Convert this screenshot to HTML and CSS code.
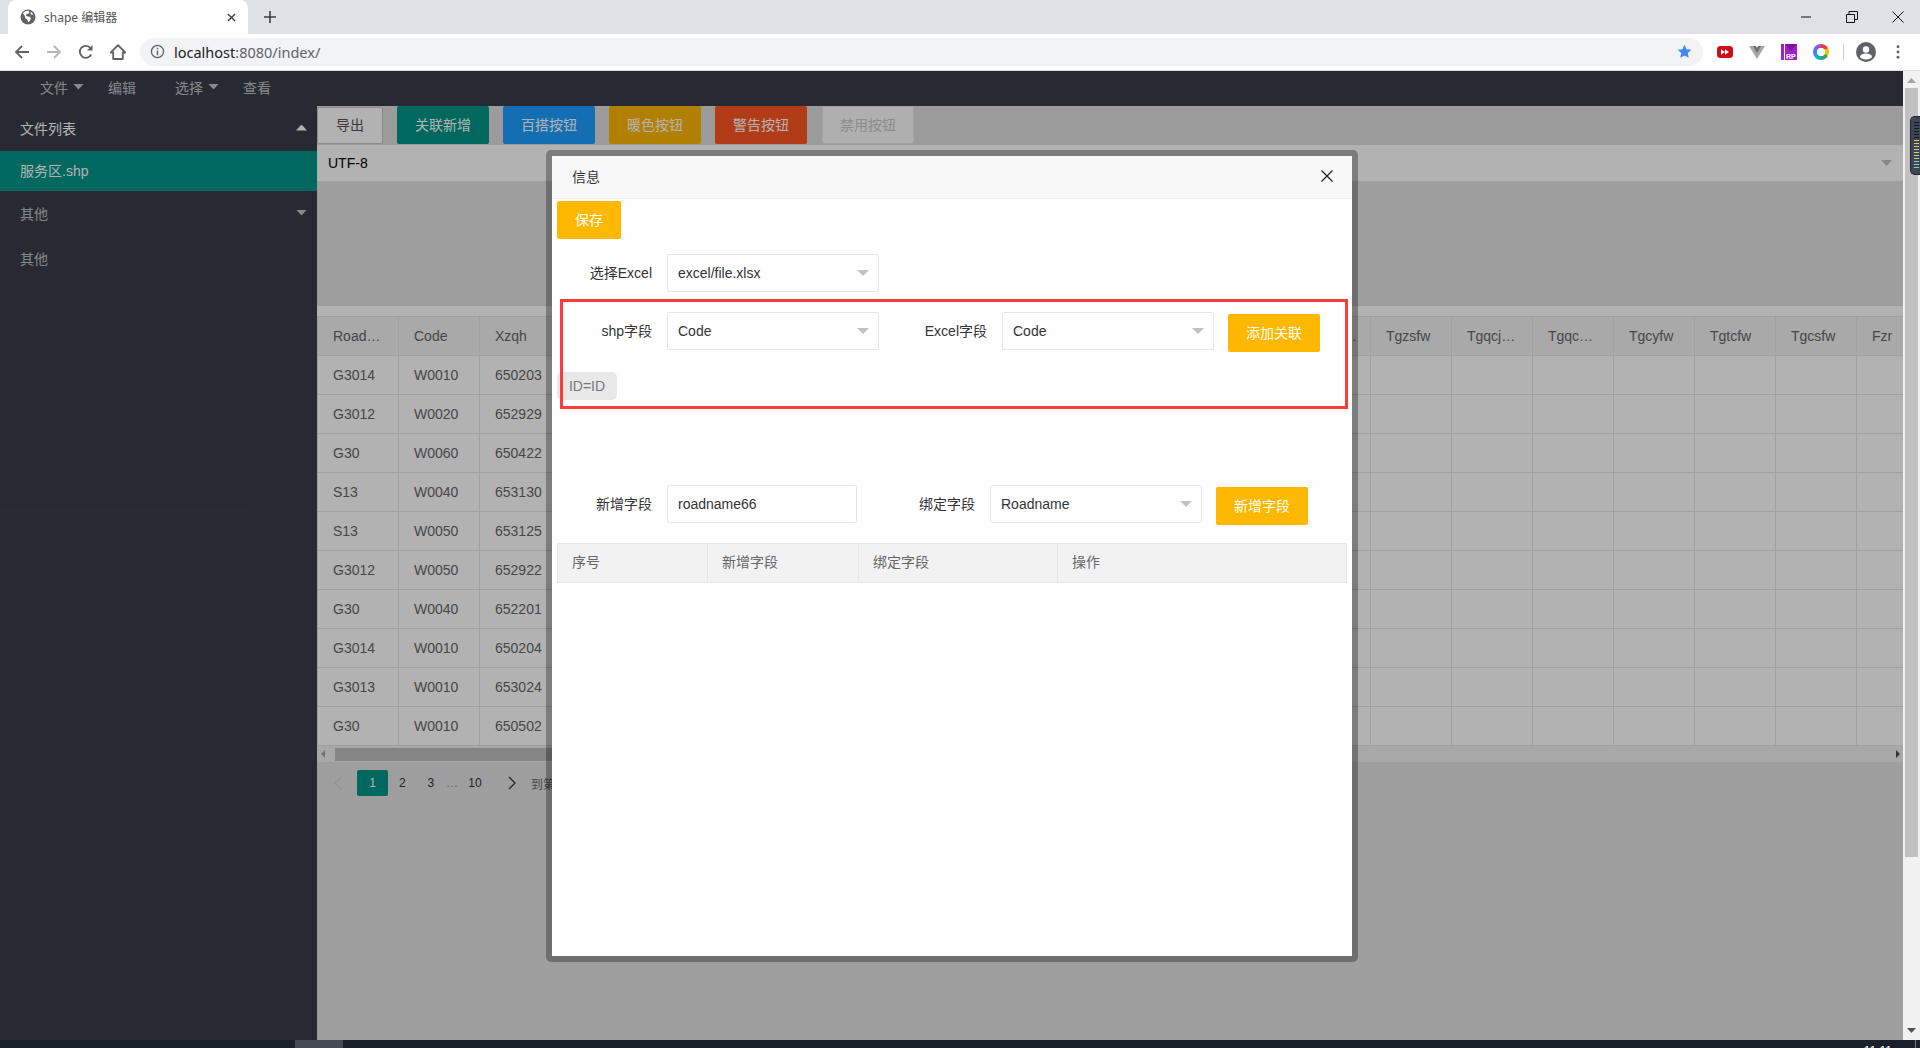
FILE: index.html
```html
<!DOCTYPE html>
<html lang="zh">
<head>
<meta charset="utf-8">
<title>shape 编辑器</title>
<link rel="stylesheet" href="styles.css">
</head>
<body>
<div class="tabstrip">
  <div class="tab">
    <svg class="favicon" viewBox="0 0 16 16"><circle cx="8" cy="8" r="7.500" fill="#5f6368"/><path d="M3 4.200c1.500-1.800 3.500-2.600 5.500-2.400l1 1.400-1.300 1.600-1.700.2-.5 1.500 1.500 1 2.200.2 1.300 1.600-1.300 2.700-1.600 1.300-.6-2.800-2.200-1.200-.2-1.800z" fill="#fff"/><path d="M11 2.800l2.300 2.400-1.400.8-1.400-1.200z" fill="#fff"/></svg>
    <span class="tab-title">shape 编辑器</span>
    <svg class="tab-close" viewBox="0 0 10 10"><path d="M1 1l8 8M9 1l-8 8" stroke="#3c4043" stroke-width="1.500" fill="none"/></svg>
  </div>
  <svg class="newtab" viewBox="0 0 12 12"><path d="M6 0v12M0 6h12" stroke="#3c4043" stroke-width="1.600" fill="none"/></svg>
  <div class="winctl">
    <svg viewBox="0 0 12 12"><path d="M1 6h10" stroke="#111" fill="none"/></svg>
    <svg viewBox="0 0 12 12"><path d="M.5 3.500h8v8h-8zM3 3.500v-3h8.500v8h-3" stroke="#111" fill="none"/></svg>
    <svg viewBox="0 0 12 12"><path d="M.5.500l11 11M11.500.500l-11 11" stroke="#111" fill="none"/></svg>
  </div>
</div>
<div class="urlbar">
  <svg class="nav" viewBox="0 0 16 16"><path d="M15 8H2M8 2L2 8l6 6" stroke="#5f6368" stroke-width="1.800" fill="none"/></svg>
  <svg class="nav" viewBox="0 0 16 16"><path d="M1 8h13M8 2l6 6-6 6" stroke="#b4b7bb" stroke-width="1.800" fill="none"/></svg>
  <svg class="nav" viewBox="0 0 16 16"><path d="M13.200 10.500A6 6 0 1 1 12.500 4" stroke="#5f6368" stroke-width="1.800" fill="none"/><path d="M14.500 1v5.500H9z" fill="#5f6368"/></svg>
  <svg class="nav" viewBox="0 0 16 16"><path d="M8 1.200L.8 8.500h2.400V15h9.600V8.500h2.400z" stroke="#5f6368" stroke-width="1.800" fill="none" stroke-linejoin="round"/></svg>
  <div class="omnibox">
    <svg class="info" viewBox="0 0 16 16"><circle cx="8" cy="8" r="6.500" stroke="#5f6368" stroke-width="1.400" fill="none"/><path d="M8 7v5M8 4v1.600" stroke="#5f6368" stroke-width="1.500" fill="none"/></svg>
    <span class="host">localhost</span><span class="path">:8080/index/</span>
    <svg class="star" viewBox="0 0 16 16"><path d="M8 .8l2.200 4.700 5.100.6-3.800 3.500 1 5.100L8 12.200l-4.500 2.500 1-5.100L.7 6.100l5.100-.6z" fill="#4285f4"/></svg>
  </div>
  <div class="exts">
    <svg class="ext" viewBox="0 0 16 16"><rect y="2" width="16" height="12" rx="3.500" fill="#cc0f16"/><path d="M4 5.200L8 8l-4 2.800zM8 5.200L12 8l-4 2.800z" fill="#fff"/></svg>
    <svg class="ext" viewBox="0 0 16 16"><path d="M0 2h5l3 5 3-5h5L8 15z" fill="#a8a8a8"/><path d="M4 2h3l1 2 1-2h3L8 9z" fill="#6f6f6f"/></svg>
    <svg class="ext" viewBox="0 0 16 16"><rect width="16" height="16" fill="#a51fc9"/><rect x="3" width="1" height="16" fill="#fff"/><path d="M4 0h12L10 7z" fill="#7a14a0"/><text x="5" y="14.500" class="rp">RP</text></svg>
    <div class="ring"></div>
    <div class="sep"></div>
    <svg class="avatar" viewBox="0 0 20 20"><circle cx="10" cy="10" r="10" fill="#5f6368"/><circle cx="10" cy="7.500" r="3.200" fill="#fff"/><ellipse cx="10" cy="14.500" rx="6" ry="3" fill="#fff"/></svg>
    <svg class="dots" viewBox="0 0 4 16"><circle cx="2" cy="2" r="1.600" fill="#5f6368"/><circle cx="2" cy="8" r="1.600" fill="#5f6368"/><circle cx="2" cy="14" r="1.600" fill="#5f6368"/></svg>
  </div>
</div>

<div class="page">
  <div class="app">
    <header class="topnav">
      <span class="menu m1">文件<i class="caret down"></i></span>
      <span class="menu m2">编辑</span>
      <span class="menu m3">选择<i class="caret down"></i></span>
      <span class="menu m4">查看</span>
    </header>
    <div class="columns">
      <aside class="side">
        <div class="side-item head">文件列表<i class="caret up"></i></div>
        <div class="side-item active">服务区.shp</div>
        <div class="side-item">其他<i class="caret down"></i></div>
        <div class="side-item">其他</div>
      </aside>
      <main class="content">
        <div class="tools">
          <span class="btn plain">导出</span>
          <span class="btn green">关联新增</span>
          <span class="btn blue">百搭按钮</span>
          <span class="btn warm">暖色按钮</span>
          <span class="btn red">警告按钮</span>
          <span class="btn off">禁用按钮</span>
        </div>
        <div class="encoding">UTF-8<i class="caret down small"></i></div>
        <div class="gap-area"></div>
        <div class="table-wrap">
          <table class="grid">
            <thead><tr><th>Road…</th><th>Code</th><th>Xzqh</th><th></th><th></th><th></th><th></th><th></th><th></th><th></th><th></th><th></th><th>Tgfwq…</th><th>Tgzsfw</th><th>Tgqcj…</th><th>Tgqc…</th><th>Tgcyfw</th><th>Tgtcfw</th><th>Tgcsfw</th><th>Fzr</th></tr></thead>
            <tbody>
              <tr><td>G3014</td><td>W0010</td><td>650203</td><td colspan="17" class="cells"></td></tr>
              <tr><td>G3012</td><td>W0020</td><td>652929</td><td colspan="17" class="cells"></td></tr>
              <tr><td>G30</td><td>W0060</td><td>650422</td><td colspan="17" class="cells"></td></tr>
              <tr><td>S13</td><td>W0040</td><td>653130</td><td colspan="17" class="cells"></td></tr>
              <tr><td>S13</td><td>W0050</td><td>653125</td><td colspan="17" class="cells"></td></tr>
              <tr><td>G3012</td><td>W0050</td><td>652922</td><td colspan="17" class="cells"></td></tr>
              <tr><td>G30</td><td>W0040</td><td>652201</td><td colspan="17" class="cells"></td></tr>
              <tr><td>G3014</td><td>W0010</td><td>650204</td><td colspan="17" class="cells"></td></tr>
              <tr><td>G3013</td><td>W0010</td><td>653024</td><td colspan="17" class="cells"></td></tr>
              <tr><td>G30</td><td>W0010</td><td>650502</td><td colspan="17" class="cells"></td></tr>
            </tbody>
          </table>
        </div>
        <div class="hscroll"><i class="arrow left"></i><div class="hthumb"></div><i class="arrow right"></i></div>
        <div class="pager">
          <span class="pg prev"><svg viewBox="0 0 8 14"><path d="M7 1L1 7l6 6" stroke="#d2d2d2" stroke-width="1.300" fill="none"/></svg></span>
          <span class="pg cur">1</span>
          <span class="pg w28">2</span>
          <span class="pg w28">3</span>
          <span class="pg dots3">…</span>
          <span class="pg w32">10</span>
          <span class="pg next"><svg viewBox="0 0 8 14"><path d="M1 1l6 6-6 6" stroke="#333" stroke-width="1.300" fill="none"/></svg></span>
          <span class="goto">到第</span>
        </div>
      </main>
    </div>
    <div class="shade"></div>

    <section class="modal">
      <div class="modal-title">信息<svg class="modal-x" viewBox="0 0 12 12"><path d="M.5.500l11 11M11.500.500l-11 11" stroke="#222" stroke-width="1.300" fill="none"/></svg></div>
      <div class="modal-body">
        <span class="btn yellow save">保存</span>
        <div class="row r-excel">
          <label class="lbl">选择Excel</label>
          <div class="sel">excel/file.xlsx<i class="tri"></i></div>
        </div>
        <div class="row r-shp">
          <label class="lbl">shp字段</label>
          <div class="sel">Code<i class="tri"></i></div>
          <label class="lbl l2">Excel字段</label>
          <div class="sel">Code<i class="tri"></i></div>
          <span class="btn yellow add">添加关联</span>
        </div>
        <div class="tag">ID=ID</div>
        <div class="row r-new">
          <label class="lbl">新增字段</label>
          <div class="inp">roadname66</div>
          <label class="lbl l3">绑定字段</label>
          <div class="sel">Roadname<i class="tri"></i></div>
          <span class="btn yellow add2">新增字段</span>
        </div>
        <div class="fields">
          <span class="f1">序号</span><span class="f2">新增字段</span><span class="f3">绑定字段</span><span class="f4">操作</span>
        </div>
      </div>
      <div class="redbox"></div>
    </section>
  </div>
  <div class="vscroll">
    <i class="varrow up"></i>
    <div class="vthumb"></div>
    <i class="varrow dn"></i>
    <div class="meter"><b class="d"></b><b class="d"></b><b class="d"></b><b class="d"></b><b class="d"></b><b class="d"></b><b class="y"></b><b class="y"></b><b class="y"></b><b class="y"></b><b class="y"></b><b class="g"></b><b class="g"></b><b class="t"></b><b class="t"></b><b class="t"></b></div>
  </div>
</div>
<footer class="taskbar"><div class="taskbtn"></div><span class="clock">11:11</span><i class="showdesk"></i></footer>
</body>
</html>
```
FILE: styles.css
```css
* { box-sizing: border-box; }
html, body { margin: 0; height: 1048px; overflow: hidden; }
body { width: 1920px; font: 14px "Liberation Sans", "Noto Sans CJK SC", sans-serif; color: #333; background: #fff; }
i { display: block; font-style: normal; }

.tabstrip { height: 34px; background: #dee1e6; display: flex; align-items: center; position: relative; }
.tab { width: 240px; height: 34px; margin-left: 8px; background: #fff; border-radius: 8px 8px 0 0; display: flex; align-items: center; padding-left: 12px; }
.favicon { width: 16px; height: 16px; }
.tab-title { margin-left: 8px; font: 12px "Noto Sans", "Noto Sans CJK SC", sans-serif; color: #555; flex: 1; }
.tab-close { width: 9px; height: 9px; margin-right: 12px; }
.newtab { width: 12px; height: 12px; margin-left: 16px; }
.winctl { margin-left: auto; display: flex; gap: 34px; padding-right: 16px; }
.winctl svg { width: 12px; height: 12px; }

.urlbar { height: 37px; background: #fff; border-bottom: 1px solid #dadce0; display: flex; align-items: center; padding: 0 0 1px 14px; }
.nav { width: 16px; height: 16px; margin-right: 16px; }
.omnibox { width: 1563px; height: 28px; margin-left: -2px; background: #f1f3f4; border-radius: 14px; display: flex; align-items: center; padding: 0 11px 0 10px; font: 14.500px "Noto Sans", sans-serif; }
.info { width: 15px; height: 15px; margin-right: 9px; }
.host { color: #202124; }
.path { color: #5f6368; }
.star { width: 15px; height: 15px; margin-left: auto; }
.exts { display: flex; align-items: center; padding-left: 14px; }
.ext { width: 16px; height: 16px; margin-right: 16px; }
.rp { font: bold 7px "Liberation Sans", sans-serif; fill: #fff; }
.ring { width: 16px; height: 16px; border-radius: 50%; background: radial-gradient(circle, #fff 0 4px, transparent 4.500px), conic-gradient(#ea4335 0 16%, #fbbc05 16% 33%, #34a853 33% 50%, #00b0d8 50% 66%, #4285f4 66% 83%, #9b51e0 83%); }
.sep { width: 1px; height: 16px; background: #c8c8c8; margin: 0 12px 0 14px; }
.avatar { width: 20px; height: 20px; }
.dots { width: 4px; height: 14px; margin-left: 20px; }

.page { height: 969px; display: flex; }
.app { width: 1903px; position: relative; display: flex; flex-direction: column; }
.topnav { height: 35px; background: #393d49; display: flex; align-items: center; color: rgba(255,255,255,.7); padding-bottom: 4px; flex: none; }
.menu { display: flex; align-items: center; }
.m1 { margin-left: 40px; }
.m2 { margin-left: 24px; }
.m3 { margin-left: 39px; }
.m4 { margin-left: 24px; }
.caret { width: 11px; height: 6px; flex: none; }
.caret.down { background: rgba(255,255,255,.7); clip-path: polygon(0 0, 100% 0, 50% 100%); margin-left: 5px; }
.caret.up { background: #fff; clip-path: polygon(50% 0, 100% 100%, 0 100%); margin-left: 5px; }
.columns { flex: 1; display: flex; min-height: 0; }

.side { width: 317px; background: #393d49; flex: none; }
.side-item { height: 45px; padding: 0 10px 2px 20px; display: flex; align-items: center; justify-content: space-between; color: rgba(255,255,255,.7); }
.side-item.head { color: #fff; }
.side-item.active { height: 40px; background: #009688; color: #fff; }

.content { flex: 1; min-width: 0; background: #e3e3e3; display: flex; flex-direction: column; }
.tools { height: 39px; display: flex; align-items: flex-start; background: #dfdfdf; flex: none; }
.btn { display: block; height: 38px; line-height: 38px; padding: 0 18px; border-radius: 2px; color: #fff; text-align: center; font-size: 14px; flex: none; }
.plain { width: 66px; height: 37px; margin-top: 1px; line-height: 35px; padding: 0; background: #fff; border: 1px solid #c9c9c9; color: #555; margin-right: 14px; }
.green { background: #009688; margin-right: 14px; }
.blue { background: #1e9fff; margin-right: 14px; }
.warm { background: #ffb800; margin-right: 14px; }
.red { background: #ff5722; margin-right: 15px; }
.off { background: #fbfbfb; color: #c9c9c9; border: 1px solid #e6e6e6; line-height: 36px; padding: 0 17px; }
.encoding { height: 36px; background: #fff; padding: 0 11px; display: flex; align-items: center; justify-content: space-between; color: #000; flex: none; }
.caret.small { background: #c2c2c2; }
.gap-area { height: 125px; flex: none; }
.table-wrap { padding-top: 10px; background: #fff; overflow: hidden; flex: none; }
.grid { table-layout: fixed; border-collapse: separate; border-spacing: 0; width: 1620px; border-top: 1px solid #e6e6e6; background: #fff; }
.grid th, .grid td { width: 81px; height: 39px; padding: 0 15px; border-left: 1px solid #e6e6e6; border-bottom: 1px solid #e6e6e6; font-weight: 400; text-align: left; color: #666; white-space: nowrap; overflow: hidden; }
.grid th { background: #f2f2f2; }
.grid .cells { width: auto; padding: 0; background: linear-gradient(90deg, #e6e6e6 1px, transparent 1px) 0 0 / 81px 100% repeat-x; border-left: 0; }
.hscroll { height: 16px; background: #f1f1f1; position: relative; padding-top: 2px; flex: none; }
.hthumb { width: 500px; height: 13px; margin-left: 18px; background: #c1c1c1; }
.arrow { position: absolute; width: 0; height: 0; border: 4px solid transparent; }
.arrow.left { left: 4px; top: 4px; border-left: 0; border-right-color: #a3a3a3; }
.arrow.right { right: 3px; top: 4px; border-right: 0; border-left-color: #505050; }
.pager { display: flex; align-items: center; height: 26px; margin-top: 8px; padding-left: 6px; font-size: 12px; color: #333; }
.pg { height: 26px; line-height: 26px; text-align: center; display: flex; align-items: center; justify-content: center; }
.prev { width: 30px; margin-right: 4px; }
.next { width: 30px; margin-left: 6px; }
.pg svg { width: 8px; height: 14px; }
.cur { width: 31px; background: #009688; color: #fff; border-radius: 2px; }
.w28 { width: 28.500px; }
.dots3 { width: 14px; color: #999; }
.w32 { width: 32px; }
.goto { margin-left: 4px; color: #666; }

.shade { position: absolute; inset: 0; background: rgba(0,0,0,.3); }

.modal { position: absolute; left: 546px; top: 79px; width: 812px; height: 812px; border: 6px solid rgba(0,0,0,.3); border-radius: 5px; background: #fff; background-clip: padding-box; display: flex; flex-direction: column; }
.modal-title { height: 43px; padding: 0 20px 2px; background: #f8f8f8; border-bottom: 1px solid #eee; color: #333; display: flex; align-items: center; justify-content: space-between; flex: none; }
.modal-x { width: 12px; height: 12px; margin-right: -1px; }
.modal-body { padding: 2px 5px 0; }
.yellow { background: #ffb800; }
.save { width: 64px; padding: 0; }
.row { display: flex; align-items: flex-start; }
.lbl { width: 95px; height: 38px; line-height: 38px; padding-right: 0; text-align: right; margin-right: 15px; color: #333; flex: none; white-space: nowrap; }
.sel, .inp { height: 38px; line-height: 36px; border: 1px solid #e6e6e6; border-radius: 2px; padding-left: 10px; color: #333; flex: none; position: relative; background: #fff; }
.sel { width: 212px; }
.inp { width: 190px; }
.tri { position: absolute; right: 9px; top: 15px; width: 0; height: 0; border-left: 6px solid transparent; border-right: 6px solid transparent; border-top: 6px solid #c2c2c2; }
.r-excel { margin-top: 15px; }
.r-shp { margin-top: 20px; }
.l2 { width: 108px; }
.add { width: 92px; padding: 0; margin: 2px 0 0 14px; }
.tag { width: 60px; height: 28px; line-height: 28px; margin-top: 20px; text-align: center; background: #e8e8e8; border-radius: 5px; color: #777; }
.r-new { margin-top: 85px; }
.l3 { width: 118px; }
.add2 { width: 92px; padding: 0; margin: 2px 0 0 14px; }
.fields { width: 790px; height: 40px; margin-top: 18px; display: flex; background: #f2f2f2; border: 1px solid #e6e6e6; color: #666; }
.fields span { line-height: 37px; padding-left: 14px; border-right: 1px solid #e6e6e6; flex: none; }
.f1 { width: 150px; }
.f2 { width: 151px; }
.f3 { width: 199px; }
.f4 { flex: 1 !important; border-right: 0 !important; }
.redbox { position: absolute; left: 8px; top: 143px; width: 788px; height: 110px; border: 3px solid #fe3b3b; }

.vscroll { width: 17px; background: #f1f1f1; position: relative; }
.varrow { position: absolute; left: 4px; width: 9px; height: 5px; }
.varrow.up { top: 7px; background: #a3a3a3; clip-path: polygon(50% 0, 100% 100%, 0 100%); }
.varrow.dn { bottom: 7px; background: #505050; clip-path: polygon(0 0, 100% 0, 50% 100%); }
.vthumb { width: 13px; height: 769px; margin: 17px 0 0 2px; background: #c1c1c1; }
.meter { position: absolute; left: 7px; top: 45px; width: 10px; height: 59px; background: #3f4553; border: 1px solid #22262e; border-right: 0; border-radius: 5px 0 0 5px; padding: 5px 0 0 3px; display: flex; flex-direction: column; gap: 2px; }
.meter b { display: block; width: 5px; height: 1px; flex: none; }
.meter .d { background: #14161c; }
.meter .y { background: #d8cf6a; }
.meter .g { background: #bcd68a; }
.meter .t { background: #78d8b8; }

.taskbar { height: 8px; background: #1a2029; display: flex; overflow: hidden; position: relative; }
.taskbtn { width: 48px; height: 8px; margin-left: 295px; background: #464a54; }
.clock { margin-left: auto; margin-right: 23px; margin-top: 3px; font-size: 12px; line-height: 16px; color: #fff; flex: none; }
.showdesk { width: 1px; background: #777; margin-right: 4px; }
```
